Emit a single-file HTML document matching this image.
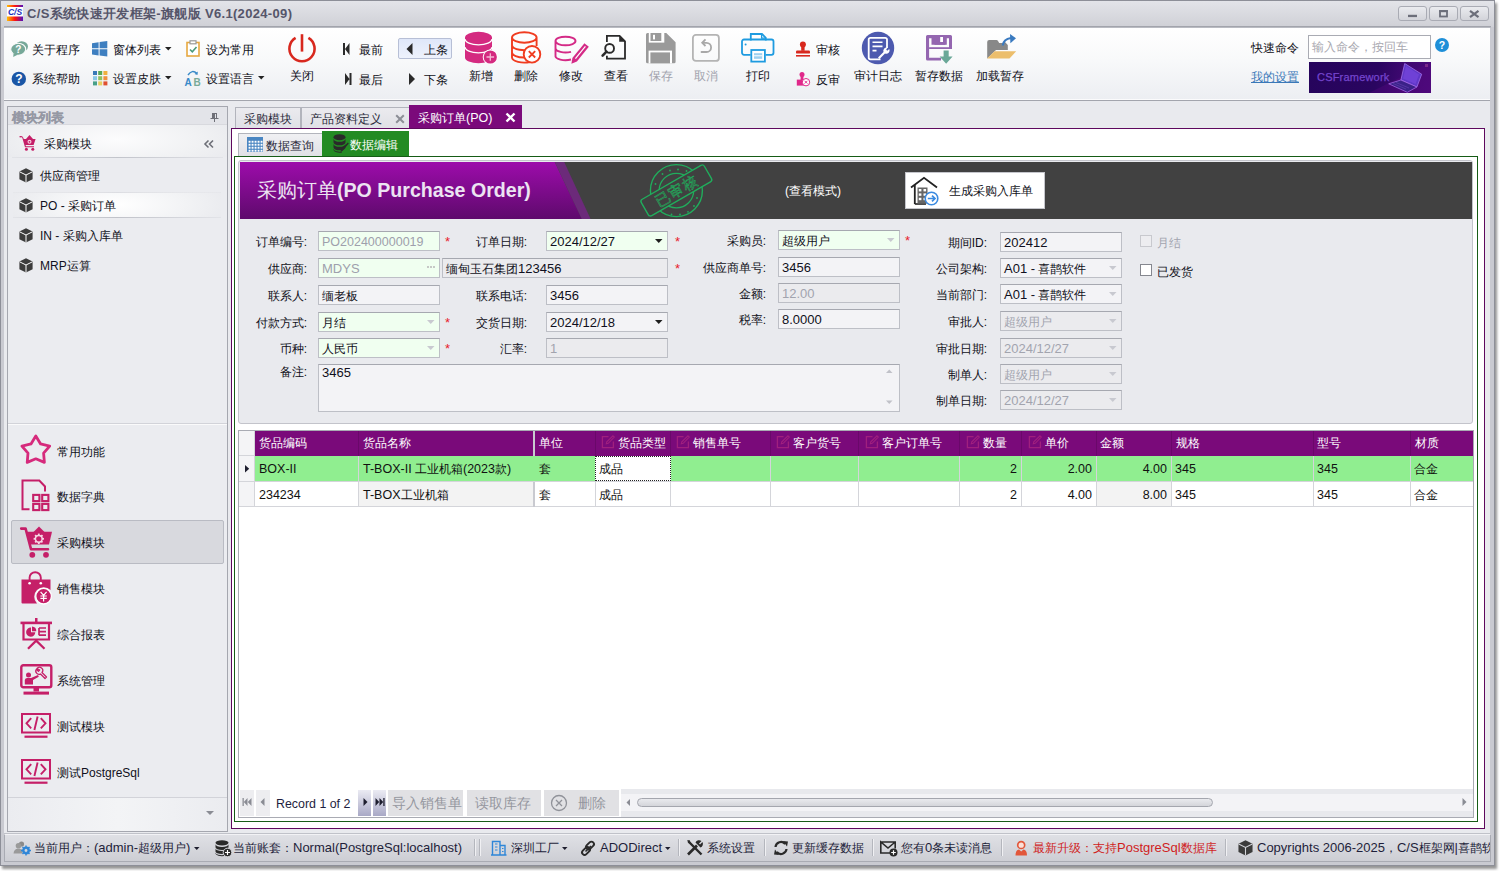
<!DOCTYPE html>
<html><head><meta charset="utf-8">
<style>
html,body{margin:0;padding:0;width:1500px;height:871px;overflow:hidden;background:#fff;font-family:"Liberation Sans",sans-serif;font-size:12px;color:#101020}
.a{position:absolute}
.t{position:absolute;white-space:nowrap;line-height:16px;font-size:12px}
svg{position:absolute;overflow:visible}
</style></head><body>
<!-- window frame -->
<div class="a" style="left:0;top:0;width:1500px;height:871px;background:#fff"></div>
<div class="a" style="left:0;top:0;width:1495px;height:866px;background:#c9cad1;border:1px solid #8d8f98;box-sizing:border-box;box-shadow:2px 3px 2.5px rgba(0,0,0,0.42)"></div>
<!-- title bar -->
<div class="a" style="left:1px;top:1px;width:1493px;height:26px;background:linear-gradient(#e3e4e9,#cfd0d6)"></div>
<div class="a" style="left:4px;top:26px;width:1487px;height:1px;background:#a2a4ac"></div><div class="a" style="left:4px;top:27px;width:1487px;height:1px;background:#b9bbc2"></div>
<div class="a" id="title" style="left:27px;top:6px;white-space:nowrap;font-size:13px;letter-spacing:0.33px;font-weight:bold;color:#55556a;line-height:16px">C/S系统快速开发框架-旗舰版 V6.1(2024-09)</div>

<div class="a" style="left:1398px;top:6px;width:29px;height:15px;box-sizing:border-box;border:1px solid #a9abb4;border-radius:3px;background:linear-gradient(#eaebef,#d3d4da)"></div><div class="a" style="left:1429px;top:6px;width:29px;height:15px;box-sizing:border-box;border:1px solid #a9abb4;border-radius:3px;background:linear-gradient(#eaebef,#d3d4da)"></div><div class="a" style="left:1460px;top:6px;width:29px;height:15px;box-sizing:border-box;border:1px solid #a9abb4;border-radius:3px;background:linear-gradient(#eaebef,#d3d4da)"></div>
<svg style="left:1408px;top:14px" width="10" height="4"><rect x="0" y="0.8" width="9" height="2.3" fill="#6c6e7a"/></svg>
<svg style="left:1439px;top:10px" width="10" height="8"><rect x="1" y="1" width="7" height="5.5" stroke="#6c6e7a" stroke-width="1.8" fill="none"/><rect x="0.2" y="0.2" width="8.6" height="2" fill="#6c6e7a"/></svg>
<svg style="left:1469px;top:10px" width="11" height="8"><path d="M1 0.8 L9.5 7.2 M9.5 0.8 L1 7.2" stroke="#6c6e7a" stroke-width="2.2"/></svg>

<!-- ribbon -->
<div class="a" style="left:4px;top:28px;width:1486px;height:72px;background:linear-gradient(#ffffff 0%,#f8f9fa 45%,#eceef2 100%)"></div>
<div class="a" style="left:4px;top:99px;width:1486px;height:1px;background:#fbfbfc"></div><div class="a" style="left:4px;top:100px;width:1486px;height:1px;background:#a3a5ad"></div>


<!-- ribbon small buttons -->
<div class="t" style="left:32px;top:42px">关于程序</div>
<div class="t" style="left:32px;top:71px">系统帮助</div>
<div class="t" style="left:113px;top:42px">窗体列表</div>
<div class="t" style="left:113px;top:71px">设置皮肤</div>
<div class="t" style="left:206px;top:42px">设为常用</div>
<div class="t" style="left:206px;top:71px">设置语言</div>
<svg style="left:165px;top:47px" width="7" height="4"><path d="M0 0H6.5L3.25 3.5Z" fill="#222"/></svg>
<svg style="left:165px;top:76px" width="7" height="4"><path d="M0 0H6.5L3.25 3.5Z" fill="#222"/></svg>
<svg style="left:258px;top:76px" width="7" height="4"><path d="M0 0H6.5L3.25 3.5Z" fill="#222"/></svg>
<!-- icons small -->
<svg style="left:10px;top:40px" width="18" height="18" viewBox="0 0 18 18"><ellipse cx="11.6" cy="6.6" rx="6.4" ry="5.3" fill="#76a898"/><ellipse cx="8.2" cy="9.2" rx="7.5" ry="6" fill="#76a898" stroke="#fbfbfc" stroke-width="1.1"/><path d="M3.6 13 L3.2 17 L8 14.6Z" fill="#76a898"/><text x="8.2" y="13" font-size="10" font-weight="bold" fill="#fff" text-anchor="middle" font-family="Liberation Sans">?</text></svg>
<svg style="left:11px;top:71px" width="16" height="16" viewBox="0 0 16 16"><circle cx="7.8" cy="7.9" r="7.2" fill="#1a56a6"/><text x="7.9" y="12.3" font-size="12" font-weight="bold" fill="#fff" text-anchor="middle" font-family="Liberation Sans">?</text></svg>
<svg style="left:92px;top:41px" width="16" height="16" viewBox="0 0 16 16"><path d="M0 2.2 L6.6 1.2 V7.3 H0Z M7.6 1 L15.3 0 V7.3 H7.6Z M0 8.3 H6.6 V14.5 L0 13.6Z M7.6 8.3 H15.3 V15.4 L7.6 14.6Z" fill="#3e7fc0"/></svg>
<svg style="left:93px;top:71px" width="15" height="15" viewBox="0 0 15 15"><rect x="0" y="0" width="4" height="4" fill="#3a7ab8"/><rect x="5.2" y="0" width="4" height="4" fill="#58a858"/><rect x="10.4" y="0" width="4" height="4" fill="#f0b040"/><rect x="0" y="5.2" width="4" height="4" fill="#8ac8e8"/><rect x="5.2" y="5.2" width="4" height="4" fill="#90c060"/><rect x="10.4" y="5.2" width="4" height="4" fill="#f09040"/><rect x="0" y="10.4" width="4" height="4" fill="#48a088"/><rect x="5.2" y="10.4" width="4" height="4" fill="#e8d060"/><rect x="10.4" y="10.4" width="4" height="4" fill="#e05030"/></svg>
<svg style="left:186px;top:40px" width="15" height="17" viewBox="0 0 15 17"><rect x="1" y="2.5" width="12" height="13.5" fill="#fff" stroke="#e6a840" stroke-width="1.6"/><rect x="4" y="0.8" width="6" height="3" fill="#fff" stroke="#9a9a9a" stroke-width="1.2"/><path d="M4 9.5 L6.3 11.8 L10.5 7" stroke="#4a9a7a" stroke-width="1.6" fill="none"/></svg>
<svg style="left:184px;top:69px" width="18" height="18" viewBox="0 0 18 18"><path d="M4 6 Q8 0 13 4.5" stroke="#3a8ac8" stroke-width="1.4" fill="none"/><path d="M13.8 2.5 L13.5 6 L10.5 5" fill="#3a8ac8"/><text x="0.5" y="16.5" font-size="10" font-weight="bold" fill="#3a8ac8" font-family="Liberation Sans">A</text><text x="9.5" y="16.5" font-size="10" font-weight="bold" fill="#78aa98" font-family="Liberation Sans">B</text></svg>

<!-- close power -->
<svg style="left:286px;top:33px" width="32" height="32" viewBox="0 0 32 32"><path d="M9.6 4.8 A12.6 12.6 0 1 0 22.4 4.8" stroke="#d8281e" stroke-width="2.6" fill="none"/><path d="M16 1.2 V18.6" stroke="#d8281e" stroke-width="2.6"/></svg>
<div class="t" style="left:290px;top:68px">关闭</div>
<!-- nav -->
<div class="a" style="left:398px;top:38px;width:54px;height:21px;box-sizing:border-box;border:1px solid #b7bfd6;border-radius:2px;background:linear-gradient(#dfe7f9,#eef2fc)"></div>
<svg style="left:343px;top:43px" width="8" height="13"><path d="M0 0H2V12H0Z M6.5 0 V12 L2 6Z" fill="#2a2a2a"/></svg>
<svg style="left:344px;top:73px" width="8" height="13"><path d="M5.5 0H7.5V12H5.5Z M1 0 V12 L5.5 6Z" fill="#2a2a2a"/></svg>
<svg style="left:406px;top:43px" width="8" height="13"><path d="M6.5 0 V12 L0.5 6Z" fill="#2a2a2a"/></svg>
<svg style="left:409px;top:73px" width="8" height="13"><path d="M0 0 V12 L6 6Z" fill="#2a2a2a"/></svg>
<div class="t" style="left:359px;top:42px">最前</div>
<div class="t" style="left:359px;top:72px">最后</div>
<div class="t" style="left:424px;top:42px">上条</div>
<div class="t" style="left:424px;top:72px">下条</div>


<!-- big icons -->
<svg style="left:464px;top:31px" width="36" height="34" viewBox="0 0 36 34"><path d="M1 6.5 A13.5 5.8 0 0 1 28 6.5 V26.5 A13.5 5.8 0 0 1 1 26.5Z" fill="#d42a80"/><path d="M1 8 A13.5 5.8 0 0 0 28 8 M1 16 A13.5 5.8 0 0 0 28 16" stroke="#fff" stroke-width="1.3" fill="none"/><circle cx="26.3" cy="26" r="7.6" fill="#fff"/><circle cx="26.3" cy="26" r="6.6" fill="#d42a80"/><path d="M26.3 22.2 V29.8 M22.5 26 H30.1" stroke="#f4b8d4" stroke-width="1.3"/></svg>
<svg style="left:510px;top:31px" width="36" height="34" viewBox="0 0 36 34"><path d="M2 6.5 A12.3 5.2 0 0 1 26.6 6.5 A12.3 5.2 0 0 1 2 6.5 M2 6.5 V26.5 A12.3 5.2 0 0 0 20 31 M26.6 6.5 V15 M2 14.5 A12.3 5.2 0 0 0 22 18 M2 21.5 A12.3 5.2 0 0 0 14 26.5" stroke="#f03c20" stroke-width="1.9" fill="none"/><circle cx="22" cy="23.3" r="8.3" fill="#fff" stroke="#f03c20" stroke-width="1.9"/><path d="M18.8 20.1 L25.2 26.5 M25.2 20.1 L18.8 26.5" stroke="#f03c20" stroke-width="1.8"/></svg>
<svg style="left:554px;top:35px" width="34" height="30" viewBox="0 0 34 30"><path d="M1.5 6 A10 4.3 0 0 1 21.5 6 A10 4.3 0 0 1 1.5 6 M1.5 6 V20.5 A10 4.3 0 0 0 17 24.5 M1.5 13 A10 4.3 0 0 0 17 16.8" stroke="#d42a86" stroke-width="1.9" fill="none"/><path d="M17.4 28.8 L22.9 26.5 L34.8 11.8 L30.4 8.2 L18.4 22.9Z" fill="#d42a86"/><path d="M21.4 23.6 L31.4 11.4" stroke="#fff" stroke-width="1.2"/></svg>
<svg style="left:601px;top:34px" width="28" height="28" viewBox="0 0 28 28"><path d="M5.9 8 V1.9 H18.6 L24 7.3 V24.7 H5.9 V21.8" stroke="#2a2a2a" stroke-width="1.8" fill="none"/><path d="M18.2 1.8 L24.2 7.8 H18.2Z" fill="#2a2a2a"/><circle cx="8.6" cy="14.4" r="4.4" stroke="#2a2a2a" stroke-width="1.9" fill="none"/><path d="M5.5 17.6 L1.6 21.6" stroke="#2a2a2a" stroke-width="2.6" stroke-linecap="round"/></svg>
<svg style="left:646px;top:33px" width="30" height="31" viewBox="0 0 30 31"><path d="M1.5 0 H20.3 L29.6 9.2 V28.8 A1.5 1.5 0 0 1 28.1 30.3 H1.5 A1.5 1.5 0 0 1 0 28.8 V1.5 A1.5 1.5 0 0 1 1.5 0Z" fill="#9a9a9a"/><rect x="2.8" y="0" width="15.5" height="9.6" fill="#fff"/><rect x="4.5" y="0" width="10.8" height="8" fill="#9a9a9a"/><rect x="7" y="1.8" width="2" height="4.6" fill="#fff"/><rect x="2.6" y="17.6" width="23.4" height="12.7" fill="#fff"/><rect x="4.4" y="19.4" width="19.6" height="10.9" fill="#9a9a9a"/></svg>
<svg style="left:691px;top:33px" width="30" height="30" viewBox="0 0 30 30"><rect x="1.9" y="1.9" width="26" height="26" rx="3" stroke="#b4b4b4" stroke-width="1.8" fill="none"/><path d="M14.5 6.3 L11.2 9.8 L14.5 13" stroke="#a8a8a8" stroke-width="1.8" fill="none"/><path d="M11.8 9.8 H15.5 A4.6 4.6 0 0 1 15.5 19 H10.5" stroke="#a8a8a8" stroke-width="1.8" fill="none" stroke-linecap="round"/></svg>
<svg style="left:741px;top:33px" width="34" height="30" viewBox="0 0 34 30"><path d="M9.8 7.5 V1 H21 L24.8 4.8 V7.5" stroke="#1e9be0" stroke-width="1.8" fill="none"/><path d="M20.6 1 V5.2 H24.8" stroke="#1e9be0" stroke-width="1.3" fill="none"/><path d="M9.6 21.8 H3 A2 2 0 0 1 1 19.8 V8.5 A2 2 0 0 1 3 6.5 H30.5 A2 2 0 0 1 32.5 8.5 V19.8 A2 2 0 0 1 30.5 21.8 H24.6" stroke="#1e9be0" stroke-width="1.8" fill="none"/><circle cx="4.6" cy="11.6" r="1" fill="#1e9be0"/><rect x="10.3" y="17" width="13.6" height="11.6" stroke="#1e9be0" stroke-width="1.8" fill="#fff"/><rect x="13" y="20.2" width="8.2" height="5.6" fill="#9cd0f0"/><path d="M13 22.8 H21.2" stroke="#fff" stroke-width="1"/></svg>
<svg style="left:795px;top:41px" width="17" height="17" viewBox="0 0 17 17"><circle cx="7.9" cy="3.6" r="3" fill="#d8281e"/><path d="M6.2 5 H9.6 V9.8 H6.2Z" fill="#d8281e"/><rect x="1" y="9.6" width="14" height="3" rx="1.2" fill="#d8281e"/><rect x="1" y="14" width="14" height="1.6" fill="#d8281e"/></svg>
<svg style="left:796px;top:72px" width="15" height="15" viewBox="0 0 15 15"><circle cx="6" cy="2.6" r="2.5" fill="#e0288a"/><path d="M4.6 4 H7.4 V8 H4.6Z" fill="#e0288a"/><rect x="0.8" y="7.6" width="10" height="6" fill="#e0288a"/><circle cx="10" cy="10.2" r="3.7" fill="#fff" stroke="#e0288a" stroke-width="1"/><path d="M8.6 8.8 L11.4 11.6 M11.4 8.8 L8.6 11.6" stroke="#e0288a" stroke-width="0.9"/></svg>
<svg style="left:861px;top:31px" width="34" height="34" viewBox="0 0 34 34"><circle cx="17" cy="17" r="16.2" fill="#4d5aaf"/><path d="M19.5 28.3 H9.4 A1.7 1.7 0 0 1 7.7 26.6 V8.5 A1.7 1.7 0 0 1 9.4 6.8 H24.3 A1.7 1.7 0 0 1 26 8.5 V17" stroke="#fff" stroke-width="1.8" fill="none"/><path d="M11.5 11.2 H21.5 M11.5 15.4 H21.5 M11.5 19.6 H15.5" stroke="#fff" stroke-width="1.6"/><path d="M17 26.5 L22.5 21 A3.4 3.4 0 0 1 26.8 16.6 L25.2 18.6 L26.2 19.8 L28.3 18 A3.4 3.4 0 0 1 24 22.6 L18.5 28Z" fill="#fff"/></svg>
<svg style="left:925px;top:34px" width="32" height="31" viewBox="0 0 32 31"><path d="M2.5 1 H25.5 A1.5 1.5 0 0 1 27 2.5 V15 H24 V4.2 H21.8 V10.8 H6.5 V4.2 H4.1 V23.8 H16 V26.5 H2.5 A1.5 1.5 0 0 1 1 25 V2.5 A1.5 1.5 0 0 1 2.5 1Z" fill="#9466b0"/><rect x="9.5" y="1" width="10.8" height="9.8" fill="#9466b0"/><rect x="15.2" y="3" width="2.8" height="5" fill="#fff"/><path d="M4.1 13.2 H24 V15 H4.1Z" fill="#9466b0"/><path d="M18.6 16.5 H23.7 V22.6 H27.6 L21.15 29.7 L14.6 22.6 H18.6Z" fill="#6aa898"/></svg>
<svg style="left:986px;top:33px" width="32" height="28" viewBox="0 0 32 28"><path d="M1.2 9 A2 2 0 0 1 3.2 7 H10.5 A2 2 0 0 1 12 8 L13.2 10 H16.5 L18.5 8.5 L21.8 12 V17 H10 L1.2 25.5Z" fill="#888"/><path d="M1 25.5 L8.6 18.3 H30.2 L23.5 25.6Z" fill="#ecbe6c"/><path d="M16.8 12.5 Q17.5 6 25 5" stroke="#3a7ac0" stroke-width="2.2" fill="none"/><path d="M24 1 L30 5.2 L24.4 10.3Z" fill="#3a7ac0"/></svg>

<!-- title icon -->
<svg style="left:7px;top:5px" width="16" height="16" viewBox="0 0 16 16"><defs><linearGradient id="cs1" x1="0" x2="1"><stop offset="0" stop-color="#ffc000"/><stop offset="0.5" stop-color="#ff1010"/><stop offset="1" stop-color="#5010c0"/></linearGradient></defs><rect x="0" y="0" width="16" height="16" fill="url(#cs1)"/><rect x="0" y="2" width="16" height="9.5" fill="#fff"/><text x="8" y="10" font-size="8.5" font-weight="bold" font-style="italic" fill="#2030c0" text-anchor="middle" font-family="Liberation Sans">C/S</text></svg>

<!-- big buttons text -->
<div class="t" style="left:469px;top:68px">新增</div>
<div class="t" style="left:514px;top:68px">删除</div>
<div class="t" style="left:559px;top:68px">修改</div>
<div class="t" style="left:604px;top:68px">查看</div>
<div class="t" style="left:649px;top:68px;color:#a2a3ad">保存</div>
<div class="t" style="left:694px;top:68px;color:#a2a3ad">取消</div>
<div class="t" style="left:746px;top:68px">打印</div>
<div class="t" style="left:816px;top:42px">审核</div>
<div class="t" style="left:816px;top:72px">反审</div>
<div class="t" style="left:854px;top:68px">审计日志</div>
<div class="t" style="left:915px;top:68px">暂存数据</div>
<div class="t" style="left:976px;top:68px">加载暂存</div>

<!-- quick command -->
<div class="t" style="left:1251px;top:40px">快速命令</div>
<div class="a" style="left:1308px;top:35px;width:123px;height:24px;box-sizing:border-box;border:1px solid #a9abb3;background:#fff"></div>
<div class="t" style="left:1312px;top:39px;color:#a8a8b0">输入命令，按回车</div>
<svg style="left:1435px;top:38px" width="14" height="14" viewBox="0 0 14 14"><circle cx="7" cy="7" r="7" fill="#1e8fd8"/><text x="7" y="11" font-size="10.5" font-weight="bold" fill="#fff" text-anchor="middle" font-family="Liberation Sans">?</text></svg>
<div class="t" style="left:1251px;top:69px;color:#3a78b8;text-decoration:underline">我的设置</div>
<div class="a" style="left:1309px;top:62px;width:122px;height:31px;background:linear-gradient(100deg,#26045c 0%,#2a0560 55%,#3e0870 75%,#4a0a7a 100%);overflow:hidden">
  <div class="t" style="left:8px;top:7px;font-size:11px;color:#7444cc;-webkit-text-stroke:0.25px #7444cc;letter-spacing:0.2px">CSFramework</div>
  <svg style="left:0;top:0" width="122" height="31" viewBox="0 0 122 31"><path d="M60 31 L122 0 V31Z" fill="#5a0a80" opacity="0.35"/><path d="M95.7 1.5 L112.7 12.2 L107.9 25 L91.9 18Z" fill="#6038c8" stroke="#a070e8" stroke-width="0.8"/><path d="M97 4 L110 12.5 L106.5 22 L94 16.5Z" fill="#7a48e0" opacity="0.6"/><path d="M91.9 18 L107.9 25 L98.3 30.3 L79.7 21.8Z" fill="#3a2288" stroke="#b070f0" stroke-width="0.7"/><path d="M84 21.5 L97 27 M87 20.5 L100 26" stroke="#5a3aa8" stroke-width="0.8"/><rect x="116" y="2" width="3" height="3" fill="#7a2a8a"/></svg>
</div>

<!-- main bg -->
<div class="a" style="left:4px;top:101px;width:1486px;height:733px;background:#e9eaee"></div>


<!-- left panel -->
<div class="a" style="left:7px;top:106px;width:221px;height:726px;border:1px solid #a5a7af;box-sizing:border-box;background:#ebecf0"></div>
<div class="a" style="left:8px;top:107px;width:219px;height:18px;background:#e3e4e9;border-bottom:1px solid #d8d9de;box-sizing:border-box"></div>
<div class="t" style="left:12px;top:110px;font-weight:bold;font-size:13px;color:#9598a4;-webkit-text-stroke:0.2px #9598a4">模块列表</div>
<svg style="left:210px;top:113px" width="9" height="9" viewBox="0 0 9 9"><path d="M2 0 H7 V5 H8.5 V6 H5 V9 H4 V6 H0.5 V5 H2Z" fill="#6e7078"/><path d="M5 1 H6 V5 H5Z" fill="#e3e4e9"/></svg>
<div class="a" style="left:8px;top:125px;width:219px;height:32px;background:radial-gradient(ellipse 60% 110% at 50% 45%,#fcfcfd 0%,#f0f1f3 65%,#e9eaee 100%)"></div><div class="a" style="left:12px;top:157px;width:211px;height:1px;background:linear-gradient(90deg,rgba(190,192,200,0.2),#c2c4cb 50%,rgba(190,192,200,0.2))"></div>
<svg style="left:19px;top:134px" width="17" height="17" viewBox="0 0 17 17"><path d="M0.3 2.3 Q3 1.6 4 3.3 L4.8 5 H16.6 L14.6 11 H6.6 L6.9 12.2 H15 V13.3 H6 L3.2 3.6 Q2.6 2.8 0.8 3.5Z" fill="#c51f68"/><path d="M7 5 L10.5 1 L14 5Z" fill="#c51f68"/><circle cx="7.4" cy="15.2" r="1.5" fill="#c51f68"/><circle cx="13.8" cy="15.2" r="1.5" fill="#c51f68"/><circle cx="10.5" cy="7.8" r="2" fill="#f8d0e0"/><circle cx="10.5" cy="7.8" r="0.9" fill="#c51f68"/></svg>
<div class="t" style="left:44px;top:136px">采购模块</div>
<svg style="left:204px;top:140px" width="10" height="8" viewBox="0 0 10 8"><path d="M4.5 0.5 L1 4 L4.5 7.5 M9 0.5 L5.5 4 L9 7.5" stroke="#6e7078" stroke-width="1.6" fill="none"/></svg>
<svg style="left:19px;top:168px" width="14" height="15" viewBox="0 0 14 15"><path d="M7 0.3 L13.6 3.6 V11.2 L7 14.6 L0.4 11.2 V3.6Z" fill="#3c3c3c"/><path d="M0.6 3.8 L7 7 L13.4 3.8 M7 7 V14.5" stroke="#fff" stroke-width="1" fill="none"/></svg><div class="t" style="left:40px;top:168px">供应商管理</div>
<div class="a" style="left:13px;top:192px;width:208px;height:25px;background:radial-gradient(ellipse 55% 140% at 50% 50%,#ffffff 0%,#f2f3f5 60%,#e9eaee 100%)"></div><div class="a" style="left:13px;top:192px;width:208px;height:1px;background:linear-gradient(90deg,rgba(215,216,222,0.2),#dcdde2 50%,rgba(215,216,222,0.2))"></div><div class="a" style="left:13px;top:217px;width:208px;height:1px;background:linear-gradient(90deg,rgba(190,192,200,0.2),#c0c2c9 50%,rgba(190,192,200,0.2))"></div>
<svg style="left:19px;top:198px" width="14" height="15" viewBox="0 0 14 15"><path d="M7 0.3 L13.6 3.6 V11.2 L7 14.6 L0.4 11.2 V3.6Z" fill="#3c3c3c"/><path d="M0.6 3.8 L7 7 L13.4 3.8 M7 7 V14.5" stroke="#fff" stroke-width="1" fill="none"/></svg><div class="t" style="left:40px;top:198px">PO - 采购订单</div>
<svg style="left:19px;top:228px" width="14" height="15" viewBox="0 0 14 15"><path d="M7 0.3 L13.6 3.6 V11.2 L7 14.6 L0.4 11.2 V3.6Z" fill="#3c3c3c"/><path d="M0.6 3.8 L7 7 L13.4 3.8 M7 7 V14.5" stroke="#fff" stroke-width="1" fill="none"/></svg><div class="t" style="left:40px;top:228px">IN - 采购入库单</div>
<svg style="left:19px;top:258px" width="14" height="15" viewBox="0 0 14 15"><path d="M7 0.3 L13.6 3.6 V11.2 L7 14.6 L0.4 11.2 V3.6Z" fill="#3c3c3c"/><path d="M0.6 3.8 L7 7 L13.4 3.8 M7 7 V14.5" stroke="#fff" stroke-width="1" fill="none"/></svg><div class="t" style="left:40px;top:258px">MRP运算</div>

<div class="a" style="left:8px;top:423px;width:219px;height:1px;background:#d2d3d9"></div>
<div class="a" style="left:8px;top:424px;width:219px;height:1px;background:#fafafb"></div>
<div class="a" style="left:11px;top:520px;width:213px;height:44px;box-sizing:border-box;border:1px solid #b9bbc3;border-radius:2px;background:#d8d9de"></div>
<div class="t" style="left:57px;top:444px">常用功能</div>
<div class="t" style="left:57px;top:489px">数据字典</div>
<div class="t" style="left:57px;top:535px">采购模块</div>
<div class="t" style="left:57px;top:581px">销售模块</div>
<div class="t" style="left:57px;top:627px">综合报表</div>
<div class="t" style="left:57px;top:673px">系统管理</div>
<div class="t" style="left:57px;top:719px">测试模块</div>
<div class="t" style="left:57px;top:765px">测试PostgreSql</div>
<svg style="left:20px;top:433px" width="33" height="33" viewBox="0 0 33 33"><path d="M15.80 3.00 L20.62 10.97 L29.69 13.09 L23.60 20.13 L24.38 29.41 L15.80 25.80 L7.22 29.41 L8.00 20.13 L1.91 13.09 L10.98 10.97Z" stroke="#d62a7c" stroke-width="2.8" stroke-linejoin="round" fill="none"/></svg>
<svg style="left:21px;top:479px" width="31" height="34" viewBox="0 0 31 34"><path d="M8.5 30.2 H1.5 V1.6 H18.3 L24 7.5 V12.5" stroke="#c51f68" stroke-width="2" fill="none"/><g stroke="#c51f68" stroke-width="2.1" fill="none"><rect x="12.2" y="15.9" width="6.2" height="6.2"/><rect x="21.2" y="15.9" width="6.2" height="6.2"/><rect x="12.2" y="24.9" width="6.2" height="6.2"/><rect x="21.2" y="24.9" width="6.2" height="6.2"/></g></svg>
<svg style="left:20px;top:525px" width="33" height="33" viewBox="0 0 33 33"><path d="M1.2 3.6 H5.6 L11 24.2 H28" stroke="#c51f68" stroke-width="2.6" stroke-linecap="round" stroke-linejoin="round" fill="none"/><path d="M6.8 6.8 H32 L29 19.6 H10Z" fill="#c51f68"/><path d="M13.5 7 L19 1.5 L24.5 7Z" fill="#c51f68"/><circle cx="12.3" cy="29.8" r="2.9" fill="#c51f68"/><circle cx="26" cy="29.8" r="2.9" fill="#c51f68"/><circle cx="18.8" cy="13.8" r="3.4" fill="none" stroke="#f6d6e4" stroke-width="1.5"/><g fill="#f6d6e4"><rect x="17.90" y="8.60" width="1.8" height="2.2" transform="rotate(0 18.8 13.8)"/><rect x="17.90" y="8.60" width="1.8" height="2.2" transform="rotate(45 18.8 13.8)"/><rect x="17.90" y="8.60" width="1.8" height="2.2" transform="rotate(90 18.8 13.8)"/><rect x="17.90" y="8.60" width="1.8" height="2.2" transform="rotate(135 18.8 13.8)"/><rect x="17.90" y="8.60" width="1.8" height="2.2" transform="rotate(180 18.8 13.8)"/><rect x="17.90" y="8.60" width="1.8" height="2.2" transform="rotate(225 18.8 13.8)"/><rect x="17.90" y="8.60" width="1.8" height="2.2" transform="rotate(270 18.8 13.8)"/><rect x="17.90" y="8.60" width="1.8" height="2.2" transform="rotate(315 18.8 13.8)"/></g></svg>
<svg style="left:20px;top:571px" width="33" height="34" viewBox="0 0 33 34"><path d="M1.5 8.6 H30.5 V19 A9 9 0 0 0 17 32.5 H2.5 A1 1 0 0 1 1.5 31.5Z" fill="#c51f68"/><path d="M9.6 10.5 V6.6 A5.6 5.4 0 0 1 20.8 6.6 V10.5" stroke="#c51f68" stroke-width="1.9" fill="none"/><circle cx="9.6" cy="12.2" r="1.3" fill="#fff"/><circle cx="20.8" cy="12.2" r="1.3" fill="#fff"/><circle cx="23.6" cy="25.2" r="7.8" fill="#c51f68" stroke="#fff" stroke-width="1.3"/><path d="M20.6 20.8 L23.6 24.4 L26.6 20.8 M20.4 25 H26.8 M20.4 27.4 H26.8 M23.6 24.4 V30.4" stroke="#fff" stroke-width="1.2" fill="none"/></svg>
<svg style="left:20px;top:618px" width="33" height="32" viewBox="0 0 33 32"><rect x="0.5" y="3.6" width="31.5" height="2.6" fill="#c51f68"/><rect x="15" y="0" width="2.5" height="4" fill="#c51f68"/><path d="M3.5 6 V21.5 H29 V6" stroke="#c51f68" stroke-width="2.2" fill="none"/><path d="M8 30.8 L16.2 22.6 L24.5 30.8" stroke="#c51f68" stroke-width="2.2" fill="none"/><path d="M11 9.6 A4.6 4.6 0 1 0 15.3 14.2 H11Z" fill="#c51f68"/><path d="M12 8.6 A4.6 4.6 0 0 1 16.3 13.2 H12Z" fill="#c51f68"/><path d="M19 10 H26 M19 13.6 H26 M19 17.2 H26" stroke="#c51f68" stroke-width="1.7"/><path d="M19 10 V17.2" stroke="#c51f68" stroke-width="1.7"/></svg>
<svg style="left:20px;top:664px" width="33" height="32" viewBox="0 0 33 32"><rect x="1.3" y="1.3" width="30" height="22" rx="2" stroke="#c51f68" stroke-width="2.4" fill="none"/><rect x="3.5" y="27.6" width="25.5" height="3" fill="#c51f68"/><rect x="13.5" y="23.5" width="5.5" height="4" fill="#c51f68"/><circle cx="8.5" cy="11" r="2.5" fill="#c51f68"/><path d="M4.8 20.5 V16 A2.5 2.5 0 0 1 7.3 14 H11 L18 11 L18.8 12.8 L13 16 V20.5Z" fill="#c51f68"/><path d="M17 4.5 A3.2 3.2 0 0 1 22 8.5 L26.5 13 L25 14.5 L20.5 10 A3.2 3.2 0 0 1 16.5 5.2 L18.4 7.2 L19.7 6Z" stroke="#c51f68" stroke-width="1.3" fill="none" stroke-linejoin="round"/></svg>
<svg style="left:21px;top:713px" width="30" height="26" viewBox="0 0 30 26"><rect x="1" y="1" width="28" height="18.5" stroke="#c51f68" stroke-width="2" fill="none"/><rect x="3.5" y="22.6" width="23" height="2.2" fill="#c51f68"/><path d="M10.2 5.2 L5.5 10.3 L10.2 15.3 M19.8 5.2 L24.5 10.3 L19.8 15.3 M16.6 3.5 L13.4 17" stroke="#c51f68" stroke-width="1.9" fill="none"/></svg>
<svg style="left:21px;top:759px" width="30" height="26" viewBox="0 0 30 26"><rect x="1" y="1" width="28" height="18.5" stroke="#c51f68" stroke-width="2" fill="none"/><rect x="3.5" y="22.6" width="23" height="2.2" fill="#c51f68"/><path d="M10.2 5.2 L5.5 10.3 L10.2 15.3 M19.8 5.2 L24.5 10.3 L19.8 15.3 M16.6 3.5 L13.4 17" stroke="#c51f68" stroke-width="1.9" fill="none"/></svg>
<div class="a" style="left:8px;top:797px;width:219px;height:1px;background:#d2d3d9"></div>
<div class="a" style="left:8px;top:798px;width:219px;height:33px;background:linear-gradient(90deg,#ebecf0,#f3f4f6 50%,#ebecf0)"></div>
<svg style="left:206px;top:811px" width="9" height="5"><path d="M0 0 H8 L4 4Z" fill="#8a8c94"/></svg>



<!-- doc tabs -->
<div class="a" style="left:235px;top:107px;width:66px;height:22px;box-sizing:border-box;border:1px solid #b2b4bc;border-bottom:none;background:linear-gradient(#ebebef,#dfe0e5)"></div>
<div class="t" style="left:244px;top:111px;color:#2a2a3a">采购模块</div>
<div class="a" style="left:301px;top:107px;width:109px;height:22px;box-sizing:border-box;border:1px solid #b2b4bc;border-bottom:none;background:linear-gradient(#ebebef,#dfe0e5)"></div>
<div class="t" style="left:310px;top:111px;color:#2a2a3a">产品资料定义</div>
<svg style="left:395px;top:114px" width="10" height="10" viewBox="0 0 10 10"><path d="M1.2 1.2 L8.8 8.8 M8.8 1.2 L1.2 8.8" stroke="#8c8e96" stroke-width="2"/></svg>
<div class="a" style="left:409px;top:105px;width:113px;height:24px;background:#7b0a7b"></div>
<div class="t" style="left:418px;top:110px;color:#fff">采购订单<span style="font-size:12.5px">(PO)</span></div>
<svg style="left:505px;top:112px" width="11" height="11" viewBox="0 0 11 11"><path d="M1.5 1.5 L9.5 9.5 M9.5 1.5 L1.5 9.5" stroke="#fff" stroke-width="2.4"/></svg>

<!-- purple frame -->
<div class="a" style="left:231px;top:128px;width:254px;height:701px;box-sizing:border-box;border:1px solid #5e085e;background:#fff;width:1254px"></div>
<!-- sub tabs -->
<div class="a" style="left:238px;top:133px;width:85px;height:24px;box-sizing:border-box;border:1px solid #b2b4bc;border-bottom:none;background:linear-gradient(#f0f0f3,#dfe0e5)"></div>
<svg style="left:247px;top:137px" width="16" height="15" viewBox="0 0 16 15"><rect x="0" y="0" width="16" height="15" fill="#4a86c2"/><g fill="#fff"><rect x="1.6" y="3.8" width="1.9" height="1.9"/><rect x="1.6" y="6.8" width="1.9" height="1.9"/><rect x="1.6" y="9.8" width="1.9" height="1.9"/><rect x="1.6" y="12.8" width="1.9" height="1.9"/><rect x="4.6" y="3.8" width="1.9" height="1.9"/><rect x="4.6" y="6.8" width="1.9" height="1.9"/><rect x="4.6" y="9.8" width="1.9" height="1.9"/><rect x="4.6" y="12.8" width="1.9" height="1.9"/><rect x="7.6" y="3.8" width="1.9" height="1.9"/><rect x="7.6" y="6.8" width="1.9" height="1.9"/><rect x="7.6" y="9.8" width="1.9" height="1.9"/><rect x="7.6" y="12.8" width="1.9" height="1.9"/><rect x="10.6" y="3.8" width="1.9" height="1.9"/><rect x="10.6" y="6.8" width="1.9" height="1.9"/><rect x="10.6" y="9.8" width="1.9" height="1.9"/><rect x="10.6" y="12.8" width="1.9" height="1.9"/><rect x="13.6" y="3.8" width="1.9" height="1.9"/><rect x="13.6" y="6.8" width="1.9" height="1.9"/><rect x="13.6" y="9.8" width="1.9" height="1.9"/><rect x="13.6" y="12.8" width="1.9" height="1.9"/></g></svg>
<div class="t" style="left:266px;top:138px;color:#2a2a3a">数据查询</div>
<div class="a" style="left:322px;top:131px;width:87px;height:26px;background:#238b23"></div>
<svg style="left:333px;top:134px" width="16" height="19" viewBox="0 0 16 19"><ellipse cx="6.5" cy="3.2" rx="6" ry="3" fill="#2a2a2a"/><path d="M0.5 4.8 A6 3 0 0 0 12.5 4.8 V8.3 A6 3 0 0 1 0.5 8.3Z M0.5 9.8 A6 3 0 0 0 12.5 9.8 V13.3 A6 3 0 0 1 0.5 13.3Z M0.5 14.8 A6 3 0 0 0 9 17.5 V18.5 A6 3 0 0 1 0.5 16Z" fill="#2a2a2a"/><path d="M14.8 8.5 L15.8 9.5 L9.5 17 L7.5 17.8 L8 15.8Z" fill="#2a2a2a"/></svg>
<div class="t" style="left:350px;top:137px;color:#fff">数据编辑</div>

<!-- green frame -->
<div class="a" style="left:234px;top:156px;width:1244px;height:666px;box-sizing:border-box;border:1px solid #165c16;background:#fff"></div>

<!-- header -->
<div class="a" style="left:238px;top:160px;width:1235px;height:264px;box-sizing:border-box;border:1px solid #c3c4cb;border-radius:3px;background:#e9eaee"></div>
<div class="a" style="left:240px;top:162px;width:1232px;height:57px;background:#414141;overflow:hidden">
  <div class="a" style="left:0;top:0;width:400px;height:57px;background:linear-gradient(#9d0cab,#5e0a6c);clip-path:polygon(0 0,314.7px 0,341.8px 57px,0 57px)"></div>
  <div class="a" style="left:0;top:0;width:400px;height:57px;background:#6c2a7a;clip-path:polygon(314.7px 0,324.2px 0,350.6px 57px,341.8px 57px)"></div>
</div>
<div class="t" id="htitle" style="left:257px;top:179px;font-size:19.5px;line-height:22px;font-weight:bold;color:#ece4f2"><span style="font-weight:normal">采购订单</span><span style="font-size:19.6px">(PO Purchase Order)</span></div>
<svg style="left:640px;top:160px" width="74" height="62" viewBox="0 0 74 62"><g stroke="#20ad5c" fill="none"><circle cx="36.4" cy="30.6" r="26" stroke-width="1.4"/><circle cx="36.4" cy="30.6" r="17.3" stroke-width="1.3"/></g><g fill="#20ad5c"><circle cx="22.5" cy="14" r="0.9"/><circle cx="30" cy="10.5" r="0.9"/><circle cx="38" cy="9.5" r="0.9"/><circle cx="46.5" cy="11" r="0.9"/><circle cx="15.5" cy="24" r="0.9"/><circle cx="15" cy="35" r="0.9"/><circle cx="57" cy="38" r="0.9"/><circle cx="54" cy="46" r="0.9"/><circle cx="48" cy="51.8" r="0.9"/><circle cx="40" cy="54.5" r="0.9"/><circle cx="31.5" cy="54.5" r="0.9"/></g><g transform="rotate(-30 36.4 30.6)"><rect x="0" y="21" width="72.8" height="19" rx="2.5" fill="#404040" stroke="#20ad5c" stroke-width="1.4"/><text x="36.4" y="36" font-size="14.5" fill="#404040" stroke="#20ad5c" stroke-width="0.55" text-anchor="middle" font-family="Liberation Sans" letter-spacing="0.5">已审核</text></g></svg>
<div class="t" style="left:785px;top:183px;color:#fff">(查看模式)</div>
<div class="a" style="left:905px;top:172px;width:140px;height:37px;box-sizing:border-box;border:1px solid #c5c6cc;background:#fff"></div>
<svg style="left:909px;top:176px" width="32" height="30" viewBox="0 0 32 30"><path d="M2 11.5 L15 1.8 L28 11.5" stroke="#222" stroke-width="1.8" fill="none"/><path d="M5.8 9 V28" stroke="#222" stroke-width="1.8"/><path d="M5.8 28 H17" stroke="#222" stroke-width="1.6"/><rect x="8.5" y="11.5" width="10" height="16" fill="#666"/><g fill="#fff"><rect x="9.8" y="13" width="2.6" height="2.4"/><rect x="14.5" y="13" width="2.6" height="2.4"/><rect x="9.8" y="17.4" width="2.6" height="2.4"/><rect x="14.5" y="17.4" width="2.6" height="2.4"/><rect x="9.8" y="21.8" width="2.6" height="2.4"/><rect x="14.5" y="21.8" width="2.6" height="2.4"/></g><circle cx="22.5" cy="22.5" r="6.3" fill="#fff" stroke="#3a8ae0" stroke-width="1.6"/><path d="M18.8 22.5 H25.5 M23 19.6 L26 22.5 L23 25.4" stroke="#3a8ae0" stroke-width="1.7" fill="none"/></svg>
<div class="t" style="left:949px;top:183px">生成采购入库单</div>

<!-- form panel -->


<!-- form fields -->
<div class="t" style="left:107px;width:200px;text-align:right;top:234px">订单编号:</div>
<div class="a" style="left:318px;top:231px;width:122px;height:20px;box-sizing:border-box;border:1px solid #bdbfc6;border-top-color:#a6a8b0;background:#f0fff0"></div>
<div class="t" style="left:322px;top:234px;color:#9ea0ac"><span style="font-size:12.5px">PO202400000019</span></div>
<div class="t" style="left:445px;top:234px;color:#e8202a;font-size:13px">*</div>
<div class="t" style="left:107px;width:200px;text-align:right;top:261px">供应商:</div>
<div class="a" style="left:318px;top:258px;width:122px;height:20px;box-sizing:border-box;border:1px solid #bdbfc6;border-top-color:#a6a8b0;background:#f0fff0"></div>
<div class="t" style="left:322px;top:261px;color:#9ea0ac"><span style="font-size:13px">MDYS</span></div>
<svg style="left:427px;top:266px" width="9" height="3"><rect x="0" y="0" width="2" height="2" fill="#c6c8c6"/><rect x="3" y="0" width="2" height="2" fill="#c6c8c6"/><rect x="6" y="0" width="2" height="2" fill="#c6c8c6"/></svg>
<div class="a" style="left:442px;top:258px;width:226px;height:20px;box-sizing:border-box;border:1px solid #bdbfc6;border-top-color:#a6a8b0;background:#ebebee"></div>
<div class="t" style="left:446px;top:261px;color:#101020">缅甸玉石集团<span style="font-size:13px">123456</span></div>
<div class="t" style="left:675px;top:261px;color:#e8202a;font-size:13px">*</div>
<div class="t" style="left:107px;width:200px;text-align:right;top:288px">联系人:</div>
<div class="a" style="left:318px;top:285px;width:122px;height:20px;box-sizing:border-box;border:1px solid #bdbfc6;border-top-color:#a6a8b0;background:#f3f3f6"></div>
<div class="t" style="left:322px;top:288px;color:#101020">缅老板</div>
<div class="t" style="left:107px;width:200px;text-align:right;top:315px">付款方式:</div>
<div class="a" style="left:318px;top:312px;width:122px;height:20px;box-sizing:border-box;border:1px solid #bdbfc6;border-top-color:#a6a8b0;background:#f0fff0"></div>
<div class="t" style="left:322px;top:315px;color:#101020">月结</div>
<svg style="left:427px;top:320px" width="8" height="5"><path d="M0 0 H7.5 L3.75 4Z" fill="#c8c9d0"/></svg>
<div class="t" style="left:445px;top:315px;color:#e8202a;font-size:13px">*</div>
<div class="t" style="left:107px;width:200px;text-align:right;top:341px">币种:</div>
<div class="a" style="left:318px;top:338px;width:122px;height:20px;box-sizing:border-box;border:1px solid #bdbfc6;border-top-color:#a6a8b0;background:#f0fff0"></div>
<div class="t" style="left:322px;top:341px;color:#101020">人民币</div>
<svg style="left:427px;top:346px" width="8" height="5"><path d="M0 0 H7.5 L3.75 4Z" fill="#c8c9d0"/></svg>
<div class="t" style="left:445px;top:341px;color:#e8202a;font-size:13px">*</div>
<div class="t" style="left:107px;width:200px;text-align:right;top:364px">备注:</div>
<div class="a" style="left:318px;top:364px;width:582px;height:48px;box-sizing:border-box;border:1px solid #bdbfc6;border-top-color:#a6a8b0;background:#f3f3f6"></div>
<div class="t" style="left:322px;top:365px;color:#101020"><span style="font-size:13px">3465</span></div>
<svg style="left:886px;top:369px" width="7" height="5"><path d="M0 4 H6.5 L3.25 0.5Z" fill="#c0c1c8"/></svg>
<svg style="left:886px;top:400px" width="7" height="5"><path d="M0 0.5 H6.5 L3.25 4Z" fill="#c0c1c8"/></svg>
<div class="t" style="left:327px;width:200px;text-align:right;top:234px">订单日期:</div>
<div class="a" style="left:546px;top:231px;width:122px;height:20px;box-sizing:border-box;border:1px solid #bdbfc6;border-top-color:#a6a8b0;background:#f0fff0"></div>
<div class="t" style="left:550px;top:234px;color:#101020"><span style="font-size:13px">2024/12/27</span></div>
<svg style="left:655px;top:239px" width="8" height="5"><path d="M0 0 H7.5 L3.75 4Z" fill="#1e1e1e"/></svg>
<div class="t" style="left:675px;top:234px;color:#e8202a;font-size:13px">*</div>
<div class="t" style="left:327px;width:200px;text-align:right;top:288px">联系电话:</div>
<div class="a" style="left:546px;top:285px;width:122px;height:20px;box-sizing:border-box;border:1px solid #bdbfc6;border-top-color:#a6a8b0;background:#f3f3f6"></div>
<div class="t" style="left:550px;top:288px;color:#101020"><span style="font-size:13px">3456</span></div>
<div class="t" style="left:327px;width:200px;text-align:right;top:315px">交货日期:</div>
<div class="a" style="left:546px;top:312px;width:122px;height:20px;box-sizing:border-box;border:1px solid #bdbfc6;border-top-color:#a6a8b0;background:#f3f3f6"></div>
<div class="t" style="left:550px;top:315px;color:#101020"><span style="font-size:13px">2024/12/18</span></div>
<svg style="left:655px;top:320px" width="8" height="5"><path d="M0 0 H7.5 L3.75 4Z" fill="#1e1e1e"/></svg>
<div class="t" style="left:327px;width:200px;text-align:right;top:341px">汇率:</div>
<div class="a" style="left:546px;top:338px;width:122px;height:20px;box-sizing:border-box;border:1px solid #bdbfc6;border-top-color:#a6a8b0;background:#ebebee"></div>
<div class="t" style="left:550px;top:341px;color:#a2a4ae"><span style="font-size:13px">1</span></div>
<div class="t" style="left:566px;width:200px;text-align:right;top:233px">采购员:</div>
<div class="a" style="left:778px;top:230px;width:122px;height:20px;box-sizing:border-box;border:1px solid #bdbfc6;border-top-color:#a6a8b0;background:#f0fff0"></div>
<div class="t" style="left:782px;top:233px;color:#101020">超级用户</div>
<svg style="left:887px;top:238px" width="8" height="5"><path d="M0 0 H7.5 L3.75 4Z" fill="#c8c9d0"/></svg>
<div class="t" style="left:905px;top:233px;color:#e8202a;font-size:13px">*</div>
<div class="t" style="left:566px;width:200px;text-align:right;top:260px">供应商单号:</div>
<div class="a" style="left:778px;top:257px;width:122px;height:20px;box-sizing:border-box;border:1px solid #bdbfc6;border-top-color:#a6a8b0;background:#f3f3f6"></div>
<div class="t" style="left:782px;top:260px;color:#101020"><span style="font-size:13px">3456</span></div>
<div class="t" style="left:566px;width:200px;text-align:right;top:286px">金额:</div>
<div class="a" style="left:778px;top:283px;width:122px;height:20px;box-sizing:border-box;border:1px solid #bdbfc6;border-top-color:#a6a8b0;background:#ebebee"></div>
<div class="t" style="left:782px;top:286px;color:#a2a4ae"><span style="font-size:13px">12.00</span></div>
<div class="t" style="left:566px;width:200px;text-align:right;top:312px">税率:</div>
<div class="a" style="left:778px;top:309px;width:122px;height:20px;box-sizing:border-box;border:1px solid #bdbfc6;border-top-color:#a6a8b0;background:#f3f3f6"></div>
<div class="t" style="left:782px;top:312px;color:#101020"><span style="font-size:13px">8.0000</span></div>
<div class="t" style="left:787px;width:200px;text-align:right;top:235px">期间ID:</div>
<div class="a" style="left:1000px;top:232px;width:122px;height:20px;box-sizing:border-box;border:1px solid #bdbfc6;border-top-color:#a6a8b0;background:#f3f3f6"></div>
<div class="t" style="left:1004px;top:235px;color:#101020"><span style="font-size:13px">202412</span></div>
<div class="t" style="left:787px;width:200px;text-align:right;top:261px">公司架构:</div>
<div class="a" style="left:1000px;top:258px;width:122px;height:20px;box-sizing:border-box;border:1px solid #bdbfc6;border-top-color:#a6a8b0;background:#f3f3f6"></div>
<div class="t" style="left:1004px;top:261px;color:#101020"><span style="font-size:13px">A01 -</span> 喜鹊软件</div>
<svg style="left:1109px;top:266px" width="8" height="5"><path d="M0 0 H7.5 L3.75 4Z" fill="#c8c9d0"/></svg>
<div class="t" style="left:787px;width:200px;text-align:right;top:287px">当前部门:</div>
<div class="a" style="left:1000px;top:284px;width:122px;height:20px;box-sizing:border-box;border:1px solid #bdbfc6;border-top-color:#a6a8b0;background:#f3f3f6"></div>
<div class="t" style="left:1004px;top:287px;color:#101020"><span style="font-size:13px">A01 -</span> 喜鹊软件</div>
<svg style="left:1109px;top:292px" width="8" height="5"><path d="M0 0 H7.5 L3.75 4Z" fill="#c8c9d0"/></svg>
<div class="t" style="left:787px;width:200px;text-align:right;top:314px">审批人:</div>
<div class="a" style="left:1000px;top:311px;width:122px;height:20px;box-sizing:border-box;border:1px solid #bdbfc6;border-top-color:#a6a8b0;background:#ebebee"></div>
<div class="t" style="left:1004px;top:314px;color:#a2a4ae">超级用户</div>
<svg style="left:1109px;top:319px" width="8" height="5"><path d="M0 0 H7.5 L3.75 4Z" fill="#c8c9d0"/></svg>
<div class="t" style="left:787px;width:200px;text-align:right;top:341px">审批日期:</div>
<div class="a" style="left:1000px;top:338px;width:122px;height:20px;box-sizing:border-box;border:1px solid #bdbfc6;border-top-color:#a6a8b0;background:#ebebee"></div>
<div class="t" style="left:1004px;top:341px;color:#a2a4ae"><span style="font-size:13px">2024/12/27</span></div>
<svg style="left:1109px;top:346px" width="8" height="5"><path d="M0 0 H7.5 L3.75 4Z" fill="#c8c9d0"/></svg>
<div class="t" style="left:787px;width:200px;text-align:right;top:367px">制单人:</div>
<div class="a" style="left:1000px;top:364px;width:122px;height:20px;box-sizing:border-box;border:1px solid #bdbfc6;border-top-color:#a6a8b0;background:#ebebee"></div>
<div class="t" style="left:1004px;top:367px;color:#a2a4ae">超级用户</div>
<svg style="left:1109px;top:372px" width="8" height="5"><path d="M0 0 H7.5 L3.75 4Z" fill="#c8c9d0"/></svg>
<div class="t" style="left:787px;width:200px;text-align:right;top:393px">制单日期:</div>
<div class="a" style="left:1000px;top:390px;width:122px;height:20px;box-sizing:border-box;border:1px solid #bdbfc6;border-top-color:#a6a8b0;background:#ebebee"></div>
<div class="t" style="left:1004px;top:393px;color:#a2a4ae"><span style="font-size:13px">2024/12/27</span></div>
<svg style="left:1109px;top:398px" width="8" height="5"><path d="M0 0 H7.5 L3.75 4Z" fill="#c8c9d0"/></svg>
<div class="a" style="left:1140px;top:235px;width:12px;height:12px;box-sizing:border-box;border:1px solid #c8c9ce;background:#ededf0"></div>
<div class="t" style="left:1157px;top:235px;color:#a2a4ae">月结</div>
<div class="a" style="left:1140px;top:264px;width:12px;height:12px;box-sizing:border-box;border:1px solid #85878f;background:#fff"></div>
<div class="t" style="left:1157px;top:264px">已发货</div>
<!-- grid -->
<div class="a" style="left:238px;top:430px;width:1236px;height:388px;box-sizing:border-box;border:1px solid #a9abb3;background:#fff"></div>
<div class="a" style="left:239px;top:431px;width:16px;height:76px;background:#f4f4f6"></div>
<div class="a" style="left:254px;top:431px;width:1px;height:76px;background:#d4d5da"></div>
<div class="a" style="left:239px;top:455px;width:16px;height:1px;background:#d4d5da"></div>
<div class="a" style="left:239px;top:481px;width:16px;height:1px;background:#d4d5da"></div>
<div class="a" style="left:239px;top:506px;width:1234px;height:1px;background:#d4d5da"></div>
<svg style="left:245px;top:465px" width="5" height="8"><path d="M0 0 V7.5 L4.2 3.75Z" fill="#1e1e2e"/></svg>
<div class="a" style="left:255px;top:431px;width:1218px;height:25px;background:#7a0a7a"></div>
<div class="a" style="left:358px;top:431px;width:1px;height:25px;background:#6a086a"></div>
<div class="a" style="left:358px;top:456px;width:1px;height:51px;background:#d4d5da"></div>
<div class="a" style="left:533px;top:431px;width:2px;height:76px;background:#c9cad0"></div>
<div class="a" style="left:595px;top:431px;width:1px;height:25px;background:#6a086a"></div>
<div class="a" style="left:595px;top:456px;width:1px;height:51px;background:#d4d5da"></div>
<div class="a" style="left:670px;top:431px;width:1px;height:25px;background:#6a086a"></div>
<div class="a" style="left:670px;top:456px;width:1px;height:51px;background:#d4d5da"></div>
<div class="a" style="left:770px;top:431px;width:1px;height:25px;background:#6a086a"></div>
<div class="a" style="left:770px;top:456px;width:1px;height:51px;background:#d4d5da"></div>
<div class="a" style="left:858px;top:431px;width:1px;height:25px;background:#6a086a"></div>
<div class="a" style="left:858px;top:456px;width:1px;height:51px;background:#d4d5da"></div>
<div class="a" style="left:959px;top:431px;width:1px;height:25px;background:#6a086a"></div>
<div class="a" style="left:959px;top:456px;width:1px;height:51px;background:#d4d5da"></div>
<div class="a" style="left:1021px;top:431px;width:1px;height:25px;background:#6a086a"></div>
<div class="a" style="left:1021px;top:456px;width:1px;height:51px;background:#d4d5da"></div>
<div class="a" style="left:1096px;top:431px;width:1px;height:25px;background:#6a086a"></div>
<div class="a" style="left:1096px;top:456px;width:1px;height:51px;background:#d4d5da"></div>
<div class="a" style="left:1171px;top:431px;width:1px;height:25px;background:#6a086a"></div>
<div class="a" style="left:1171px;top:456px;width:1px;height:51px;background:#d4d5da"></div>
<div class="a" style="left:1313px;top:431px;width:1px;height:25px;background:#6a086a"></div>
<div class="a" style="left:1313px;top:456px;width:1px;height:51px;background:#d4d5da"></div>
<div class="a" style="left:1410px;top:431px;width:1px;height:25px;background:#6a086a"></div>
<div class="a" style="left:1410px;top:456px;width:1px;height:51px;background:#d4d5da"></div>
<div class="t" style="left:259px;top:435px;color:#fff">货品编码</div>
<div class="t" style="left:363px;top:435px;color:#fff">货品名称</div>
<div class="t" style="left:539px;top:435px;color:#fff">单位</div>
<div class="t" style="left:618px;top:435px;color:#fff">货品类型</div>
<svg style="left:601px;top:435px" width="14" height="14" viewBox="0 0 14 14"><path d="M7.5 1.6 H1.4 V12.6 H12.4 V6.5" stroke="#a0207e" stroke-width="1.3" fill="none"/><path d="M12 0.8 L13.3 2.1 L7.2 8.3 L5.3 8.8 L5.8 6.9Z" stroke="#a0207e" stroke-width="1.1" fill="none"/></svg>
<div class="t" style="left:693px;top:435px;color:#fff">销售单号</div>
<svg style="left:676px;top:435px" width="14" height="14" viewBox="0 0 14 14"><path d="M7.5 1.6 H1.4 V12.6 H12.4 V6.5" stroke="#a0207e" stroke-width="1.3" fill="none"/><path d="M12 0.8 L13.3 2.1 L7.2 8.3 L5.3 8.8 L5.8 6.9Z" stroke="#a0207e" stroke-width="1.1" fill="none"/></svg>
<div class="t" style="left:793px;top:435px;color:#fff">客户货号</div>
<svg style="left:776px;top:435px" width="14" height="14" viewBox="0 0 14 14"><path d="M7.5 1.6 H1.4 V12.6 H12.4 V6.5" stroke="#a0207e" stroke-width="1.3" fill="none"/><path d="M12 0.8 L13.3 2.1 L7.2 8.3 L5.3 8.8 L5.8 6.9Z" stroke="#a0207e" stroke-width="1.1" fill="none"/></svg>
<div class="t" style="left:882px;top:435px;color:#fff">客户订单号</div>
<svg style="left:865px;top:435px" width="14" height="14" viewBox="0 0 14 14"><path d="M7.5 1.6 H1.4 V12.6 H12.4 V6.5" stroke="#a0207e" stroke-width="1.3" fill="none"/><path d="M12 0.8 L13.3 2.1 L7.2 8.3 L5.3 8.8 L5.8 6.9Z" stroke="#a0207e" stroke-width="1.1" fill="none"/></svg>
<div class="t" style="left:983px;top:435px;color:#fff">数量</div>
<svg style="left:966px;top:435px" width="14" height="14" viewBox="0 0 14 14"><path d="M7.5 1.6 H1.4 V12.6 H12.4 V6.5" stroke="#a0207e" stroke-width="1.3" fill="none"/><path d="M12 0.8 L13.3 2.1 L7.2 8.3 L5.3 8.8 L5.8 6.9Z" stroke="#a0207e" stroke-width="1.1" fill="none"/></svg>
<div class="t" style="left:1045px;top:435px;color:#fff">单价</div>
<svg style="left:1028px;top:435px" width="14" height="14" viewBox="0 0 14 14"><path d="M7.5 1.6 H1.4 V12.6 H12.4 V6.5" stroke="#a0207e" stroke-width="1.3" fill="none"/><path d="M12 0.8 L13.3 2.1 L7.2 8.3 L5.3 8.8 L5.8 6.9Z" stroke="#a0207e" stroke-width="1.1" fill="none"/></svg>
<div class="t" style="left:1100px;top:435px;color:#fff">金额</div>
<div class="t" style="left:1176px;top:435px;color:#fff">规格</div>
<div class="t" style="left:1317px;top:435px;color:#fff">型号</div>
<div class="t" style="left:1415px;top:435px;color:#fff">材质</div>
<div class="a" style="left:255px;top:456px;width:1218px;height:25px;background:#90ee90"></div>
<div class="a" style="left:359px;top:482px;width:174px;height:24px;background:#f3f3f3"></div>
<div class="a" style="left:1097px;top:482px;width:74px;height:24px;background:#f3f3f3"></div>
<div class="a" style="left:255px;top:481px;width:1218px;height:1px;background:#d4d5da"></div>
<div class="a" style="left:358px;top:456px;width:1px;height:51px;background:#d4d5da"></div>
<div class="a" style="left:595px;top:456px;width:1px;height:51px;background:#d4d5da"></div>
<div class="a" style="left:670px;top:456px;width:1px;height:51px;background:#d4d5da"></div>
<div class="a" style="left:770px;top:456px;width:1px;height:51px;background:#d4d5da"></div>
<div class="a" style="left:858px;top:456px;width:1px;height:51px;background:#d4d5da"></div>
<div class="a" style="left:959px;top:456px;width:1px;height:51px;background:#d4d5da"></div>
<div class="a" style="left:1021px;top:456px;width:1px;height:51px;background:#d4d5da"></div>
<div class="a" style="left:1096px;top:456px;width:1px;height:51px;background:#d4d5da"></div>
<div class="a" style="left:1171px;top:456px;width:1px;height:51px;background:#d4d5da"></div>
<div class="a" style="left:1313px;top:456px;width:1px;height:51px;background:#d4d5da"></div>
<div class="a" style="left:1410px;top:456px;width:1px;height:51px;background:#d4d5da"></div>
<div class="a" style="left:595px;top:456px;width:76px;height:25px;box-sizing:border-box;border:1px dotted #222;background:#fff"></div>
<div class="t" style="left:259px;top:461px;color:#111"><span style="font-size:12.5px">BOX-II</span></div>
<div class="t" style="left:363px;top:461px;color:#111"><span style="font-size:12.5px">T-BOX-II</span> 工业机箱<span style="font-size:12.5px">(2023</span>款<span style="font-size:12.5px">)</span></div>
<div class="t" style="left:539px;top:461px;color:#111">套</div>
<div class="t" style="left:599px;top:461px;color:#111">成品</div>
<div class="t" style="left:917px;width:100px;text-align:right;top:461px;color:#111"><span style="font-size:12.5px">2</span></div>
<div class="t" style="left:992px;width:100px;text-align:right;top:461px;color:#111"><span style="font-size:12.5px">2.00</span></div>
<div class="t" style="left:1067px;width:100px;text-align:right;top:461px;color:#111"><span style="font-size:12.5px">4.00</span></div>
<div class="t" style="left:1175px;top:461px;color:#111"><span style="font-size:12.5px">345</span></div>
<div class="t" style="left:1317px;top:461px;color:#111"><span style="font-size:12.5px">345</span></div>
<div class="t" style="left:1414px;top:461px;color:#111">合金</div>
<div class="t" style="left:259px;top:487px;color:#111"><span style="font-size:12.5px">234234</span></div>
<div class="t" style="left:363px;top:487px;color:#111"><span style="font-size:12.5px">T-BOX</span>工业机箱</div>
<div class="t" style="left:539px;top:487px;color:#111">套</div>
<div class="t" style="left:599px;top:487px;color:#111">成品</div>
<div class="t" style="left:917px;width:100px;text-align:right;top:487px;color:#111"><span style="font-size:12.5px">2</span></div>
<div class="t" style="left:992px;width:100px;text-align:right;top:487px;color:#111"><span style="font-size:12.5px">4.00</span></div>
<div class="t" style="left:1067px;width:100px;text-align:right;top:487px;color:#111"><span style="font-size:12.5px">8.00</span></div>
<div class="t" style="left:1175px;top:487px;color:#111"><span style="font-size:12.5px">345</span></div>
<div class="t" style="left:1317px;top:487px;color:#111"><span style="font-size:12.5px">345</span></div>
<div class="t" style="left:1414px;top:487px;color:#111">合金</div>
<div class="a" style="left:621px;top:789px;width:852px;height:28px;background:linear-gradient(#e8e9ed 0,#e8e9ed 5px,#f3f3f6 5px,#f3f3f6 22px,#e8e9ed 22px)"></div>
<div class="a" style="left:240px;top:790px;width:14px;height:26px;background:#ededf0"></div>
<div class="a" style="left:256px;top:790px;width:14px;height:26px;background:#ededf0"></div>
<svg style="left:242px;top:798px" width="11" height="9"><path d="M0.5 0 H1.8 V8 H0.5Z M5.5 0 V8 L1.8 4Z M9.5 0 V8 L5.8 4Z" fill="#8a8c94"/></svg>
<svg style="left:260px;top:798px" width="6" height="9"><path d="M4.5 0 V8 L0.5 4Z" fill="#8a8c94"/></svg>

<div class="t" style="left:276px;top:796px;color:#1e1e3e;font-size:12.4px">Record 1 of 2</div>
<div class="a" style="left:358px;top:790px;width:13px;height:26px;background:linear-gradient(#ebebf3,#a9a9c6)"></div>
<div class="a" style="left:373px;top:790px;width:13px;height:26px;background:linear-gradient(#ebebf3,#a9a9c6)"></div>
<svg style="left:363px;top:798px" width="6" height="9"><path d="M0.5 0 V8 L4.5 4Z" fill="#1e1e2e"/></svg>
<svg style="left:375px;top:798px" width="11" height="9"><path d="M0.5 0 V8 L4.2 4Z M4.5 0 V8 L8.2 4Z M8.3 0 H9.6 V8 H8.3Z" fill="#1e1e2e"/></svg>
<div class="a" style="left:388px;top:790px;width:75px;height:26px;background:#e1e1e4"></div>
<div class="t" style="left:392px;top:795px;color:#95979f;font-size:14px;line-height:16px">导入销售单</div>
<div class="a" style="left:467px;top:790px;width:74px;height:26px;background:#e1e1e4"></div>
<div class="t" style="left:475px;top:795px;color:#95979f;font-size:14px;line-height:16px">读取库存</div>
<div class="a" style="left:544px;top:790px;width:75px;height:26px;background:#e1e1e4"></div>
<div class="t" style="left:578px;top:795px;color:#95979f;font-size:14px;line-height:16px">删除</div>
<svg style="left:550px;top:794px" width="18" height="18" viewBox="0 0 18 18"><circle cx="9" cy="9" r="7.5" stroke="#909299" stroke-width="1.3" fill="none"/><path d="M6 6 L12 12 M12 6 L6 12" stroke="#909299" stroke-width="1.3"/></svg>
<svg style="left:626px;top:799px" width="5" height="8"><path d="M4 0 V7 L0.5 3.5Z" fill="#8a8c94"/></svg>
<div class="a" style="left:637px;top:798px;width:576px;height:9px;box-sizing:border-box;border:1px solid #a4a6ae;border-radius:5px;background:linear-gradient(#e9eaee,#d4d5da)"></div>
<svg style="left:1462px;top:798px" width="5" height="9"><path d="M0.5 0 V8 L4.5 4Z" fill="#8a8c94"/></svg>
<!-- status bar -->
<div class="a" style="left:4px;top:834px;width:1487px;height:28px;background:linear-gradient(#dfe0e5,#cdced4);border:1px solid #a9abb3;border-top:1px solid #f2f2f5;box-sizing:border-box"></div>
<div class="a" style="left:4px;top:833px;width:1486px;height:1px;background:#c0c2c9"></div>
<svg style="left:13px;top:841px" width="18" height="16" viewBox="0 0 18 16"><circle cx="8.5" cy="3" r="2.6" fill="#8a8a8a"/><circle cx="5.5" cy="4.8" r="2.8" fill="#9a9a9a"/><path d="M0.5 12.5 Q1 7.5 5.5 7.8 Q9 7.8 9.5 10 V12.5Z" fill="#9a9a9a"/></svg>
<svg style="left:21px;top:845px" width="10" height="11" viewBox="0 0 10 10"><circle cx="5" cy="5" r="3" fill="none" stroke="#2e86d8" stroke-width="1.8"/><path d="M5 0 V10 M0 5 H10 M1.5 1.5 L8.5 8.5 M8.5 1.5 L1.5 8.5" stroke="#2e86d8" stroke-width="1.4"/><circle cx="5" cy="5" r="1.4" fill="#d6d7dc"/></svg>
<div class="t" style="left:34px;top:840px;color:#1e1e3a;font-size:12px">当前用户：<span style="font-size:13px">(admin-</span>超级用户<span style="font-size:13px">)</span></div>
<svg style="left:194px;top:847px" width="6" height="4"><path d="M0 0 H5.5 L2.75 3Z" fill="#1e1e2e"/></svg>
<svg style="left:215px;top:840px" width="17" height="17" viewBox="0 0 17 17"><ellipse cx="7" cy="2.8" rx="6.5" ry="2.6" fill="#2a2a2a"/><path d="M0.5 4.3 A6.5 2.6 0 0 0 13.5 4.3 V7.3 A6.5 2.6 0 0 1 0.5 7.3Z M0.5 8.5 A6.5 2.6 0 0 0 13.5 8.5 V11.5 A6.5 2.6 0 0 1 0.5 11.5Z M0.5 12.7 A6.5 2.6 0 0 0 9 15 V16 A6.5 2.6 0 0 1 0.5 13.8Z" fill="#2a2a2a"/><circle cx="12.5" cy="12.5" r="4.3" fill="#2a2a2a" stroke="#d4d5da" stroke-width="1"/><path d="M12.5 10 V15 M10 12.5 H15" stroke="#fff" stroke-width="1.2"/></svg>
<div class="t" style="left:233px;top:840px;color:#1e1e3a;font-size:12px">当前账套：<span style="font-size:13px">Normal(PostgreSql:localhost)</span></div>
<div class="a" style="left:474px;top:839px;width:1px;height:17px;background:#b4b6bd"></div><div class="a" style="left:475px;top:839px;width:1px;height:17px;background:#f0f0f3"></div>
<div class="a" style="left:479px;top:839px;width:1px;height:17px;background:#b4b6bd"></div><div class="a" style="left:480px;top:839px;width:1px;height:17px;background:#f0f0f3"></div>
<svg style="left:491px;top:840px" width="16" height="16" viewBox="0 0 16 16"><path d="M1.5 15 V1.5 H9 V15 M9 5.5 H14 V15 M0 15 H15.5" stroke="#2e86d8" stroke-width="1.4" fill="none"/><path d="M4 4 H6.5 M4 7 H6.5 M4 10 H6.5 M11 8.5 H12.5 M11 11.5 H12.5" stroke="#2e86d8" stroke-width="1.2"/></svg>
<div class="t" style="left:511px;top:840px;color:#1e1e3a;font-size:12px">深圳工厂</div>
<svg style="left:562px;top:847px" width="6" height="4"><path d="M0 0 H5.5 L2.75 3Z" fill="#1e1e2e"/></svg>
<svg style="left:580px;top:840px" width="17" height="17" viewBox="0 0 17 17"><g stroke="#2a2a2a" stroke-width="1.9" fill="none"><rect x="7.5" y="1" width="5" height="9" rx="2.5" transform="rotate(45 10 5.5)"/><rect x="3.5" y="6.5" width="5" height="9" rx="2.5" transform="rotate(45 6 11)"/></g><path d="M5.5 11.5 L11 6" stroke="#2a2a2a" stroke-width="1.6"/></svg>
<div class="t" style="left:600px;top:840px;color:#1e1e3a;font-size:12px"><span style="font-size:13px">ADODirect</span></div>
<svg style="left:665px;top:847px" width="6" height="4"><path d="M0 0 H5.5 L2.75 3Z" fill="#1e1e2e"/></svg>
<div class="a" style="left:678px;top:839px;width:1px;height:17px;background:#b4b6bd"></div><div class="a" style="left:679px;top:839px;width:1px;height:17px;background:#f0f0f3"></div>
<svg style="left:686px;top:839px" width="18" height="18" viewBox="0 0 18 18"><path d="M2 15.5 L11 6.5" stroke="#2a2a2a" stroke-width="2.6"/><path d="M9.5 3.5 A4 4 0 0 1 15.5 2 L13 4.5 L14 5.5 L16.5 3 A4 4 0 0 1 14.5 8.5 Z" fill="#2a2a2a"/><path d="M2.5 2.5 L15.5 15.5" stroke="#2a2a2a" stroke-width="2.4"/><path d="M1 1.5 L3.5 1 L4.5 3.5 L3 4.5Z" fill="#2a2a2a"/></svg>
<div class="t" style="left:707px;top:840px;color:#1e1e3a;font-size:12px">系统设置</div>
<div class="a" style="left:764px;top:839px;width:1px;height:17px;background:#b4b6bd"></div><div class="a" style="left:765px;top:839px;width:1px;height:17px;background:#f0f0f3"></div>
<svg style="left:773px;top:840px" width="16" height="16" viewBox="0 0 16 16"><path d="M2.5 7 A5.5 5.5 0 0 1 12.2 4" stroke="#2a2a2a" stroke-width="2.2" fill="none"/><path d="M10 1 L15 1.5 L14 6.5Z" fill="#2a2a2a"/><path d="M13.5 9 A5.5 5.5 0 0 1 3.8 12" stroke="#2a2a2a" stroke-width="2.2" fill="none"/><path d="M6 15 L1 14.5 L2 9.5Z" fill="#2a2a2a"/></svg>
<div class="t" style="left:792px;top:840px;color:#1e1e3a;font-size:12px">更新缓存数据</div>
<div class="a" style="left:872px;top:839px;width:1px;height:17px;background:#b4b6bd"></div><div class="a" style="left:873px;top:839px;width:1px;height:17px;background:#f0f0f3"></div>
<svg style="left:880px;top:840px" width="18" height="17" viewBox="0 0 18 17"><path d="M0.8 2 H15.2 V8.5 M10 13 H0.8 V2 L8 8 L15.2 2" stroke="#2a2a2a" stroke-width="1.6" fill="none"/><circle cx="13.5" cy="12.5" r="4" fill="#2a2a2a"/><path d="M13.5 10.2 V14.8 M11.2 12.5 H15.8" stroke="#fff" stroke-width="1.2"/></svg>
<div class="t" style="left:901px;top:840px;color:#1e1e3a;font-size:12px">您有<span style="font-size:13px">0</span>条未读消息</div>
<div class="a" style="left:1001px;top:839px;width:1px;height:17px;background:#b4b6bd"></div><div class="a" style="left:1002px;top:839px;width:1px;height:17px;background:#f0f0f3"></div>
<svg style="left:1015px;top:840px" width="13" height="16" viewBox="0 0 13 16"><circle cx="6.2" cy="5" r="4.3" fill="#e2573a"/><circle cx="6.2" cy="5.2" r="2.6" fill="#fbe0d8"/><path d="M0.5 15.5 Q0.5 10 4 9.5 L6.2 11.5 L8.4 9.5 Q12 10 12 15.5Z" fill="#e2573a"/></svg>
<div class="t" style="left:1033px;top:840px;color:#d01e1e;font-size:12px">最新升级：支持<span style="font-size:13px">PostgreSql</span>数据库</div>
<div class="a" style="left:1225px;top:839px;width:1px;height:17px;background:#b4b6bd"></div><div class="a" style="left:1226px;top:839px;width:1px;height:17px;background:#f0f0f3"></div>
<svg style="left:1238px;top:840px" width="15" height="16" viewBox="0 0 14 15"><path d="M7 0.3 L13.6 3.6 V11.2 L7 14.6 L0.4 11.2 V3.6Z" fill="#3c3c3c"/><path d="M0.6 3.8 L7 7 L13.4 3.8 M7 7 V14.5" stroke="#d4d5da" stroke-width="1" fill="none"/></svg>
<div class="a" style="left:1257px;top:834px;width:233px;height:27px;overflow:hidden"><div class="t" style="left:0;top:6px;color:#1e1e3a;font-size:12px"><span style="font-size:13px">Copyrights 2006-2025</span>，<span style="font-size:13px">C/S</span>框架网<span style="font-size:13px">|</span>喜鹊软件</div></div>

</body></html>
